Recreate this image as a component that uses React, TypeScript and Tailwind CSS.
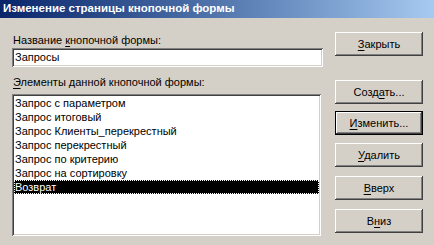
import React from 'react';

const items = [
  'Запрос с параметром',
  'Запрос итоговый',
  'Запрос Клиенты_перекрестный',
  'Запрос перекрестный',
  'Запрос по критерию',
  'Запрос на сортировку',
  'Возврат',
];

const raised =
  'shadow-[inset_-1px_-1px_#404040,inset_1px_1px_#ffffff,inset_-2px_-2px_#808080,inset_2px_2px_#d4d0c8]';
const sunken =
  'shadow-[inset_1px_1px_#808080,inset_-1px_-1px_#ffffff,inset_2px_2px_#404040,inset_-2px_-2px_#d4d0c8]';

// label with one underlined accelerator letter
const Acc: React.FC<{ pre: string; key_: string; post: string }> = ({ pre, key_, post }) => (
  <>
    {pre}
    <span className="underline underline-offset-2">{key_}</span>
    {post}
  </>
);

const Btn: React.FC<{ className?: string; isDefault?: boolean; children: React.ReactNode }> = ({
  className = '',
  isDefault,
  children,
}) => (
  <div className={`w-[88px] h-[24px] ${isDefault ? 'border border-black' : ''} ${className}`}>
    <button
      className={`w-full h-full flex items-center justify-center bg-[#d4d0c8] text-black text-[11px] ${raised}`}
    >
      <span className="leading-none">{children}</span>
    </button>
  </div>
);

export default function App() {
  return (
    <div className="w-[434px] h-[245px] bg-[#d4d0c8] overflow-hidden font-['Liberation_Sans',Arial,sans-serif] text-[11px] text-black">
      {/* title bar */}
      <div className="h-[18px] bg-gradient-to-r from-[#0a246a] to-[#a6caf0] flex items-center pl-[3px]">
        <span className="text-white font-bold text-[11.5px] leading-none">Изменение страницы кнопочной формы</span>
      </div>

      <div className="flex">
        {/* left column */}
        <div className="pl-[12px] w-[323px] flex flex-col">
          <div className="mt-[15px] h-[14px] leading-[14px] pl-[1px]">
            <Acc pre="Название " key_="к" post="нопочной формы:" />
          </div>
          <div className={`mt-[1px] h-[19px] w-[311px] bg-white ${sunken} flex items-center pl-[3px]`}>
            Запросы
          </div>
          <div className="mt-[8px] h-[14px] leading-[14px] pl-[1px]">
            <Acc pre="" key_="Э" post="лементы данной кнопочной формы:" />
          </div>
          <div className={`mt-[5px] h-[142px] w-[309px] bg-white ${sunken} p-[2px]`}>
            {items.map((it, i) => (
              <div
                key={it}
                className={`h-[14px] leading-[14px] pl-[1px] ${
                  i === items.length - 1
                    ? 'bg-black text-white outline-1 outline-dotted outline-white -outline-offset-1'
                    : ''
                }`}
              >
                {it}
              </div>
            ))}
          </div>
        </div>

        {/* right column */}
        <div className="ml-[12px] flex flex-col">
          <Btn className="mt-[14px]">
            <Acc pre="" key_="З" post="акрыть" />
          </Btn>
          <Btn className="mt-[24px]">
            <Acc pre="Созд" key_="а" post="ть..." />
          </Btn>
          <Btn className="mt-[7px]" isDefault>
            <Acc pre="" key_="И" post="зменить..." />
          </Btn>
          <Btn className="mt-[8px]">
            <Acc pre="" key_="У" post="далить" />
          </Btn>
          <Btn className="mt-[9px]">
            <Acc pre="" key_="В" post="верх" />
          </Btn>
          <Btn className="mt-[9px]">
            <Acc pre="В" key_="н" post="из" />
          </Btn>
        </div>
      </div>
    </div>
  );
}
